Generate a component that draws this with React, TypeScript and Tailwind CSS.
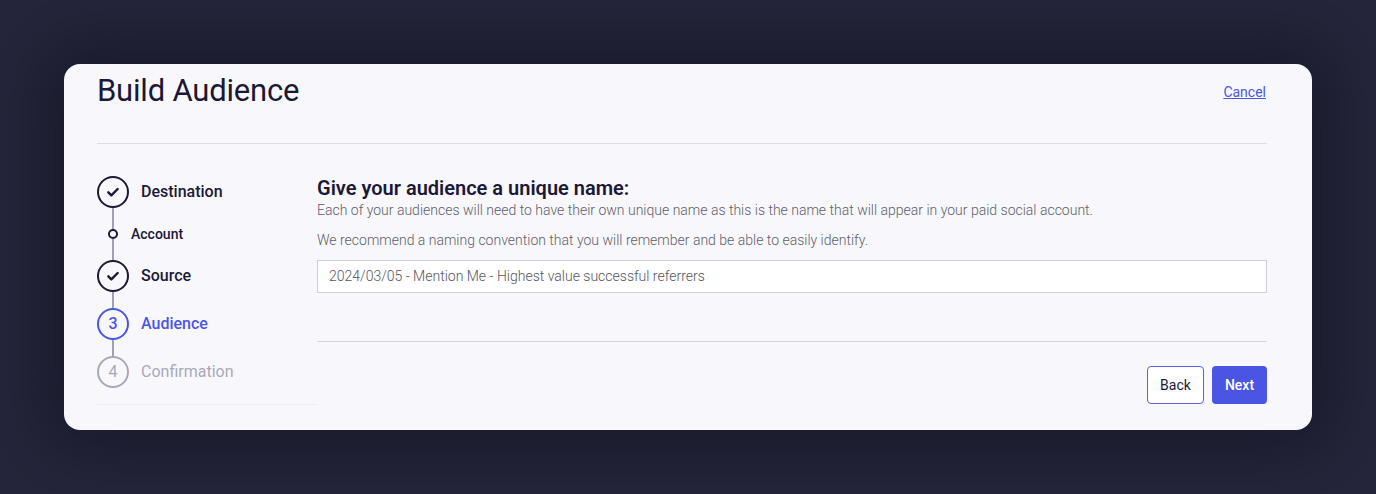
import React from "react";

function Check() {
  return (
    <svg width="16" height="16" viewBox="0 0 24 24" fill="none" stroke="#1b1838" strokeWidth="3.6" strokeLinecap="round" strokeLinejoin="round">
      <path d="M5 12.5l4.5 4.5L19 7.5" />
    </svg>
  );
}

export default function App() {
  return (
    <div
      className="w-[1376px] h-[494px] bg-[#25253b] flex items-start justify-center pt-[64px]"
      style={{ fontFamily: "Roboto, 'Liberation Sans', sans-serif" }}
    >
      <div className="w-[1248px] h-[366px] bg-[#f8f8fc] rounded-[16px] pl-[33px] pr-[45px] shadow-[0_0_60px_20px_rgba(20,20,35,0.6)]">
        {/* header */}
        <div className="flex items-start justify-between h-[80px] border-b border-[#dcdce4]">
          <h1 className="text-[31px] leading-[40px] mt-[7px] text-[#1b1838] font-normal tracking-[-0.2px]">
            Build Audience
          </h1>
          <a className="text-[14px] leading-[20px] mt-[18px] mr-[1px] text-[#4b55e3] underline cursor-pointer">Cancel</a>
        </div>

        <div className="flex pt-[32px]">
          {/* stepper */}
          <div className="w-[220px] flex flex-col border-b border-[#ebebf0] pb-[16px]">
            <div className="flex items-center h-[32px]">
              <div className="w-[32px] h-[32px] rounded-full border-2 border-[#1b1838] flex items-center justify-center">
                <Check />
              </div>
              <span className="ml-[12px] text-[16px] font-medium text-[#1b1838]">Destination</span>
            </div>
            <div className="w-[2px] h-[21px] bg-[#a19fb5] ml-[15px]" />
            <div className="flex items-center h-[10px]">
              <div className="w-[10px] h-[10px] rounded-full border-2 border-[#1b1838] ml-[11px]" />
              <span className="ml-[13px] text-[14px] leading-[10px] font-medium text-[#1b1838]">Account</span>
            </div>
            <div className="w-[2px] h-[21px] bg-[#a19fb5] ml-[15px]" />
            <div className="flex items-center h-[32px]">
              <div className="w-[32px] h-[32px] rounded-full border-2 border-[#1b1838] flex items-center justify-center">
                <Check />
              </div>
              <span className="ml-[12px] text-[16px] font-medium text-[#1b1838]">Source</span>
            </div>
            <div className="w-[2px] h-[16px] bg-[#a19fb5] ml-[15px]" />
            <div className="flex items-center h-[32px]">
              <div className="w-[32px] h-[32px] rounded-full border-2 border-[#4b55e3] flex items-center justify-center text-[16px] font-medium text-[#4b55e3]">
                3
              </div>
              <span className="ml-[12px] text-[16px] font-medium text-[#4b55e3]">Audience</span>
            </div>
            <div className="w-[2px] h-[16px] bg-[#a19fb5] ml-[15px]" />
            <div className="flex items-center h-[32px]">
              <div className="w-[32px] h-[32px] rounded-full border-2 border-[#a9a8b8] flex items-center justify-center text-[16px] text-[#a9a8b8]">
                4
              </div>
              <span className="ml-[12px] text-[16px] text-[#a9a8b8]">Confirmation</span>
            </div>
          </div>

          {/* content */}
          <div className="flex-1 flex flex-col">
            <h2 className="text-[20px] leading-[24px] font-semibold text-[#1b1838]">
              Give your audience a unique name:
            </h2>
            <p className="text-[14px] leading-[20px] font-light text-[#5e5e6a]">
              Each of your audiences will need to have their own unique name as this is the name that will appear in your paid social account.
            </p>
            <p className="text-[14px] leading-[20px] font-light text-[#5e5e6a] mt-[10px]">
              We recommend a naming convention that you will remember and be able to easily identify.
            </p>
            <div className="mt-[10px] h-[33px] border border-[#cfcfd6] bg-white flex items-center pl-[11px] text-[14px] font-light text-[#55555f]">
              2024/03/05 - Mention Me - Highest value successful referrers
            </div>
            <div className="mt-[48px] border-t border-[#d6d6de]" />
            <div className="flex justify-end gap-[8px] mt-[24px]">
              <button className="w-[57px] h-[38px] rounded-[4px] border border-[#5b62d8] bg-white text-[14px] text-[#1b1838]">
                Back
              </button>
              <button className="w-[55px] h-[38px] rounded-[4px] bg-[#4b55e3] text-[14px] font-medium text-white">
                Next
              </button>
            </div>
          </div>
        </div>
      </div>
    </div>
  );
}
